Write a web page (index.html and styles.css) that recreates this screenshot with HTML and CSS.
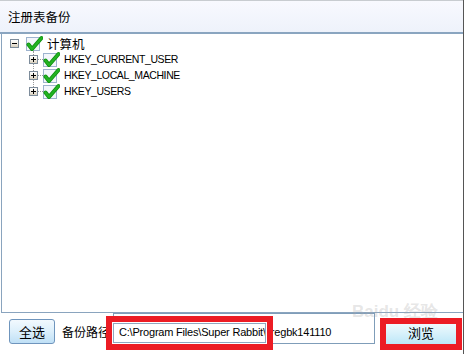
FILE: index.html
```html
<!DOCTYPE html>
<html>
<head>
  <title>注册表备份</title>
  <link rel="stylesheet" href="styles.css">
</head>
<body>
  <div class="window">
    <div class="title">注册表备份</div>

    <!-- registry tree -->
    <div class="tree">
      <div class="node root">
        <span class="expander"></span>
        <svg class="check" width="17" height="17" viewBox="0 0 17 17">
          <rect x="0.5" y="2.5" width="13" height="13" fill="#f3f6fb" stroke="#9db3ce"/>
          <path d="M2.5 9.5 L6 14 L15.5 3" fill="none" stroke="#0f8f0f" stroke-width="4" stroke-linecap="round" stroke-linejoin="round"/>
          <path d="M2.5 9.5 L6 14 L15.5 3" fill="none" stroke="#22b322" stroke-width="2.4" stroke-linecap="round" stroke-linejoin="round"/>
        </svg>
        <span class="label cn">计算机</span>
      </div>
      <div class="children">
        <div class="node child">
          <span class="expander plus"></span>
          <span class="connector"></span>
          <svg class="check" width="17" height="17" viewBox="0 0 17 17">
            <rect x="0.5" y="2.5" width="13" height="13" fill="#f3f6fb" stroke="#9db3ce"/>
            <path d="M2.5 9.5 L6 14 L15.5 3" fill="none" stroke="#0f8f0f" stroke-width="4" stroke-linecap="round" stroke-linejoin="round"/>
            <path d="M2.5 9.5 L6 14 L15.5 3" fill="none" stroke="#22b322" stroke-width="2.4" stroke-linecap="round" stroke-linejoin="round"/>
          </svg>
          <span class="label">HKEY_CURRENT_USER</span>
        </div>
        <div class="node child">
          <span class="expander plus"></span>
          <span class="connector"></span>
          <svg class="check" width="17" height="17" viewBox="0 0 17 17">
            <rect x="0.5" y="2.5" width="13" height="13" fill="#f3f6fb" stroke="#9db3ce"/>
            <path d="M2.5 9.5 L6 14 L15.5 3" fill="none" stroke="#0f8f0f" stroke-width="4" stroke-linecap="round" stroke-linejoin="round"/>
            <path d="M2.5 9.5 L6 14 L15.5 3" fill="none" stroke="#22b322" stroke-width="2.4" stroke-linecap="round" stroke-linejoin="round"/>
          </svg>
          <span class="label">HKEY_LOCAL_MACHINE</span>
        </div>
        <div class="node child">
          <span class="expander plus"></span>
          <span class="connector"></span>
          <svg class="check" width="17" height="17" viewBox="0 0 17 17">
            <rect x="0.5" y="2.5" width="13" height="13" fill="#f3f6fb" stroke="#9db3ce"/>
            <path d="M2.5 9.5 L6 14 L15.5 3" fill="none" stroke="#0f8f0f" stroke-width="4" stroke-linecap="round" stroke-linejoin="round"/>
            <path d="M2.5 9.5 L6 14 L15.5 3" fill="none" stroke="#22b322" stroke-width="2.4" stroke-linecap="round" stroke-linejoin="round"/>
          </svg>
          <span class="label">HKEY_USERS</span>
        </div>
      </div>
    </div>

    <!-- bottom bar -->
    <div class="footer">
      <button class="btn select-all">全选</button>
      <span class="path-label">备份路径</span>
      <div class="path-field">C:\Program Files\Super Rabbit\<span class="file">regbk141110</span></div>
      <button class="btn browse">浏览</button>

      <div class="watermark">Bai<span>du</span> 经验</div>
      <span class="mark mark-path"></span>
      <span class="mark mark-browse"></span>
    </div>
  </div>
</body>
</html>
```

FILE: styles.css
```css
body {
  margin: 0;
  background-color: #fff;
  font-family: "Liberation Sans", Arial, "Noto Sans CJK SC", sans-serif;
  color: #000;
}

.window {
  width: 463px;
  height: 354px;
  border-right: 1px solid #555;
  display: flex;
  flex-direction: column;
  background-color: #fff;
}

/* title bar */
.title {
  height: 31px;
  line-height: 31px;
  padding-left: 8px;
  border-top: 1px solid #c8ccd0;
  border-bottom: 2px solid #8aa5c0;
  background: linear-gradient(#f8f9fe, #eef2fb);
  font-family: "Noto Sans CJK SC", sans-serif;
  font-size: 12.5px;
}

/* tree */
.tree {
  flex: 1;
  margin-left: 1px;
  border-left: 1px solid #8aa4be;
  border-bottom: 1px solid #8aa4be;
  padding-top: 1px;
}

.node {
  height: 16px;
  display: flex;
  align-items: center;
}

.root .expander {
  margin-left: 8px;
}

.root .check {
  margin-left: 7px;
}

.label {
  margin-left: 4px;
  font-size: 10.5px;
  letter-spacing: -0.4px;
  white-space: nowrap;
}

.label.cn {
  font-family: "Noto Sans CJK SC", sans-serif;
  font-size: 12.5px;
  letter-spacing: 0;
}

.children {
  position: relative;
}

.children::before {
  content: "";
  position: absolute;
  left: 31px;
  top: 0;
  height: 40px;
  border-left: 1px dotted #9a9a9a;
}

.child .expander {
  margin-left: 27px;
  position: relative;
  z-index: 1;
}

.connector {
  width: 5px;
  border-top: 1px dotted #9a9a9a;
}

.expander {
  width: 9px;
  height: 9px;
  box-sizing: border-box;
  border: 1px solid #7d8c9b;
  background: linear-gradient(#ffffff, #f1ede4 50%, #d8cfbd);
  position: relative;
  flex: none;
}

.expander::before {
  content: "";
  position: absolute;
  left: 1px;
  top: 3px;
  width: 5px;
  height: 1px;
  background-color: #000;
}

.expander.plus::after {
  content: "";
  position: absolute;
  left: 3px;
  top: 1px;
  width: 1px;
  height: 5px;
  background-color: #000;
}

.check {
  flex: none;
  display: block;
}

/* bottom bar */
.footer {
  height: 41px;
  position: relative;
  display: flex;
  align-items: flex-start;
  padding-left: 9px;
}

.btn {
  box-sizing: border-box;
  height: 25px;
  padding: 0;
  border: 1px solid #6f95bd;
  border-radius: 3px;
  font-family: "Noto Sans CJK SC", sans-serif;
  font-size: 13px;
  color: #000;
}

.select-all {
  width: 46px;
  margin-top: 6px;
  background: linear-gradient(#f2f9fe, #dcefFB 50%, #bfe0f6);
}

.path-label {
  width: 51px;
  margin-left: 7px;
  margin-top: 6px;
  line-height: 25px;
  font-family: "Noto Sans CJK SC", sans-serif;
  font-size: 12px;
  white-space: nowrap;
}

.path-field {
  box-sizing: border-box;
  width: 262px;
  height: 31px;
  padding: 8px 0 0 5px;
  line-height: 21px;
  border: 1px solid #7f9db9;
  font-size: 11px;
  letter-spacing: -0.2px;
  white-space: nowrap;
  overflow: hidden;
}

.path-field .file {
  margin-left: 5px;
}

.browse {
  width: 76px;
  margin-left: 8px;
  margin-top: 7px;
  border-color: #7ba2c4;
  background: linear-gradient(#f6fcfe, #daf2fb 50%, #bde7f8);
}

/* faint site watermark */
.watermark {
  position: absolute;
  left: 352px;
  top: -10px;
  font-family: "Liberation Sans", sans-serif;
  font-size: 17px;
  font-weight: bold;
  line-height: 18px;
  color: rgba(170, 170, 170, 0.3);
}

/* red annotation boxes */
.mark {
  position: absolute;
  box-sizing: border-box;
  border: 6px solid #ec1c24;
}

.mark-path {
  left: 106px;
  top: 3px;
  width: 167px;
  height: 34px;
  box-shadow: inset 0 0 0 1px #fff, inset 0 0 0 2px #8ea8c0;
}

.mark-browse {
  left: 380px;
  top: 5px;
  width: 82px;
  height: 32px;
}
```
